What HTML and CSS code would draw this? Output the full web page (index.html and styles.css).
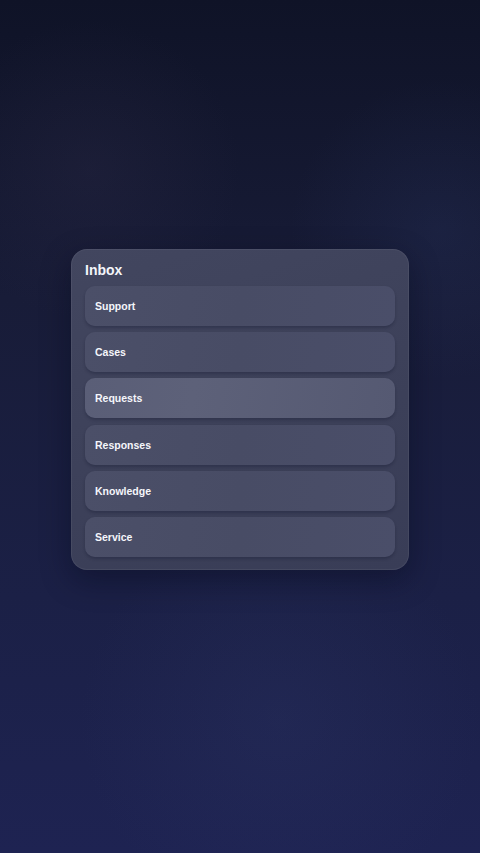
FILE: index.html
```html
<!DOCTYPE html>
<html lang="en">
<head>
<meta charset="utf-8">
<title>Inbox</title>
<link rel="stylesheet" href="styles.css">
</head>
<body>
<main class="stage">
  <section class="panel">
    <h1 class="panel-title">Inbox</h1>
    <ul class="list">
      <li class="item">Support</li>
      <li class="item">Cases</li>
      <li class="item item-active">Requests</li>
      <li class="item">Responses</li>
      <li class="item">Knowledge</li>
      <li class="item">Service</li>
    </ul>
  </section>
</main>
</body>
</html>
```
FILE: styles.css
```css
html, body {
  margin: 0;
  padding: 0;
  height: 100%;
}
body {
  font-family: "Liberation Sans", Arial, sans-serif;
  color: #ffffff;
  background:
    radial-gradient(circle at 90px 170px, rgba(55, 50, 80, 0.22) 0, rgba(55, 50, 80, 0) 150px),
    radial-gradient(circle at 440px 230px, rgba(45, 60, 110, 0.22) 0, rgba(45, 60, 110, 0) 150px),
    radial-gradient(circle at 280px 720px, rgba(50, 60, 110, 0.22) 0, rgba(50, 60, 110, 0) 200px),
    linear-gradient(180deg, #0f1327 0%, #181c38 35%, #1b2046 70%, #1e2352 100%);
}
.stage {
  height: 853px;
  display: flex;
  justify-content: center;
  padding-top: 249px;
  box-sizing: border-box;
}
.panel {
  width: 338px;
  height: 321px;
  box-sizing: border-box;
  padding: 12px 14px 13px;
  border-radius: 16px;
  background: linear-gradient(160deg, #42465f 0%, #3c4059 60%, #393d57 100%);
  box-shadow: inset 0 0 0 1px rgba(255, 255, 255, 0.06), 0 10px 30px rgba(5, 8, 25, 0.4);
  display: flex;
  flex-direction: column;
}
.panel-title {
  margin: 0 0 7px;
  font-size: 14px;
  line-height: 18px;
  font-weight: 700;
  color: #f4f5fa;
}
.list {
  list-style: none;
  margin: 0;
  padding: 0;
  display: flex;
  flex-direction: column;
  gap: 6.2px;
}
.item {
  height: 40px;
  flex-shrink: 0;
  display: flex;
  align-items: center;
  padding-left: 10px;
  border-radius: 10px;
  font-size: 10.5px;
  font-weight: 700;
  color: #f5f6fb;
  background: linear-gradient(100deg, #4b4f68 0%, #484c65 50%, #4a4e69 100%);
  box-shadow: 0 2px 3px rgba(20, 22, 45, 0.3);
}
.item-active {
  background: linear-gradient(100deg, #5a5e77 0%, #5d6179 35%, #555972 100%);
}
```
